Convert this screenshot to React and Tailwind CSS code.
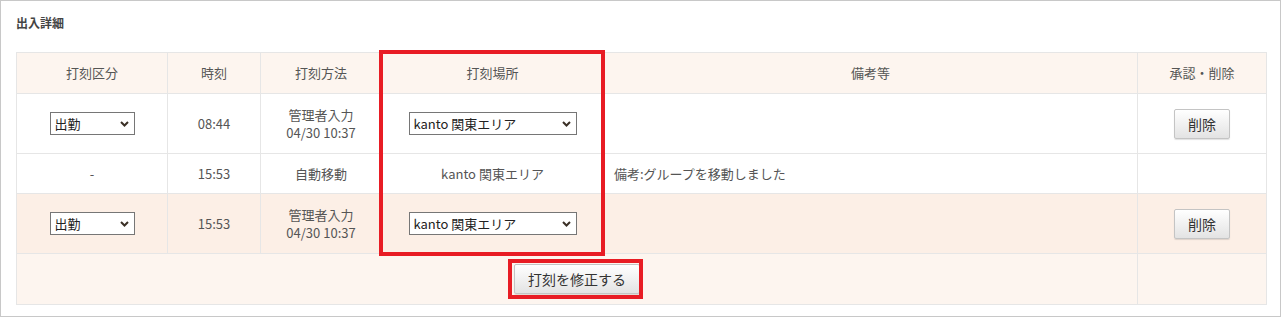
import React from "react";

const PlaceSelect = ({ value, width }) => (
  <div className={`relative inline-block align-middle ${width}`}>
    <select
      defaultValue={value}
      className="block h-[23px] w-full appearance-none rounded-none border border-[#767676] bg-white pl-[4px] pr-[20px] text-[13px] leading-[21px] text-[#222] outline-none"
    >
      <option value={value}>{value}</option>
    </select>
    <svg
      className="pointer-events-none absolute right-[6px] top-[9px]"
      width="9"
      height="6"
      viewBox="0 0 9 6"
    >
      <path d="M1 1l3.5 3.5L8 1" stroke="#3b3026" strokeWidth="2" fill="none" />
    </svg>
  </div>
);

const GrayButton = ({ children }) => (
  <button className="h-[30px] rounded-[2px] border border-[#c4c4c4] bg-linear-to-b from-white to-[#e3e3e3] px-[13px] text-[14px] leading-[28px] text-[#333] shadow-[0_1px_1px_rgba(0,0,0,0.12)]">
    {children}
  </button>
);

const headers = ["打刻区分", "時刻", "打刻方法", "打刻場所", "備考等", "承認・削除"];

const cell = "border border-[#e6e6e6] text-center align-middle";

export default function App() {
  return (
    <div className="relative h-[317px] w-[1281px] border border-[#c8c8c8] bg-white px-[15px] pt-[13px] font-['Noto_Sans_CJK_JP',sans-serif] text-[13px] text-[#555]">
      <h2 className="text-[12px] font-bold leading-[18px] text-[#444]">出入詳細</h2>

      <table className="mt-[20px] w-[1250px] table-fixed border-collapse">
        <colgroup>
          <col className="w-[151px]" />
          <col className="w-[93px]" />
          <col className="w-[121px]" />
          <col className="w-[222px]" />
          <col className="w-[534px]" />
          <col className="w-[129px]" />
        </colgroup>
        <thead>
          <tr className="h-[41px] bg-[#fdf5ef]">
            {headers.map((h) => (
              <th key={h} className={`${cell} font-normal`}>
                {h}
              </th>
            ))}
          </tr>
        </thead>
        <tbody className="leading-[18px]">
          {/* row 1 */}
          <tr className="h-[60px] bg-white">
            <td className={cell}>
              <PlaceSelect value="出勤" width="w-[85px]" />
            </td>
            <td className={cell}>08:44</td>
            <td className={cell}>
              管理者入力
              <br />
              04/30 10:37
            </td>
            <td className={cell}>
              <PlaceSelect value="kanto 関東エリア" width="w-[168px]" />
            </td>
            <td className={cell}></td>
            <td className={cell}>
              <GrayButton>削除</GrayButton>
            </td>
          </tr>

          {/* row 2 */}
          <tr className="h-[40px] bg-white">
            <td className={cell}>-</td>
            <td className={cell}>15:53</td>
            <td className={cell}>自動移動</td>
            <td className={cell}>kanto 関東エリア</td>
            <td className="border border-[#e6e6e6] pl-[10px] text-left align-middle">
              備考:グループを移動しました
            </td>
            <td className={cell}></td>
          </tr>

          {/* row 3 */}
          <tr className="h-[60px] bg-[#fcefe6]">
            <td className={cell}>
              <PlaceSelect value="出勤" width="w-[85px]" />
            </td>
            <td className={cell}>15:53</td>
            <td className={cell}>
              管理者入力
              <br />
              04/30 10:37
            </td>
            <td className={cell}>
              <PlaceSelect value="kanto 関東エリア" width="w-[168px]" />
            </td>
            <td className={cell}></td>
            <td className={cell}>
              <GrayButton>削除</GrayButton>
            </td>
          </tr>

          {/* footer */}
          <tr className="h-[51px] bg-[#fdf5ef]">
            <td colSpan={5} className={cell}>
              <GrayButton>打刻を修正する</GrayButton>
            </td>
            <td className={cell}></td>
          </tr>
        </tbody>
      </table>

      {/* highlight boxes */}
      <div className="pointer-events-none absolute left-[378px] top-[49px] h-[206px] w-[226px] border-4 border-[#e81c24]" />
      <div className="pointer-events-none absolute left-[507px] top-[258px] h-[40px] w-[135px] border-4 border-[#e81c24]" />
    </div>
  );
}
